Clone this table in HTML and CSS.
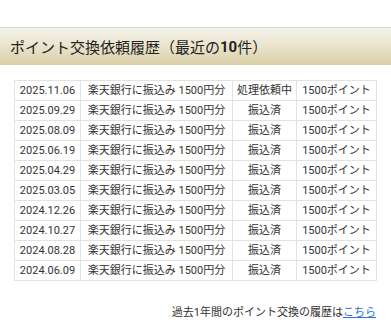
FILE: index.html
```html
<!DOCTYPE html>
<html lang="ja">
<head>
<meta charset="utf-8">
<link rel="stylesheet" href="styles.css">
</head>
<body>
<div class="page">
  <h2 class="title">ポイント交換依頼履歴（最近の<b>10</b>件）</h2>
  <table class="history">
    <colgroup><col class="c1"><col class="c2"><col class="c3"><col class="c4"></colgroup>
    <tr><td>2025.11.06</td><td>楽天銀行に振込み 1500円分</td><td>処理依頼中</td><td>1500ポイント</td></tr>
    <tr><td>2025.09.29</td><td>楽天銀行に振込み 1500円分</td><td>振込済</td><td>1500ポイント</td></tr>
    <tr><td>2025.08.09</td><td>楽天銀行に振込み 1500円分</td><td>振込済</td><td>1500ポイント</td></tr>
    <tr><td>2025.06.19</td><td>楽天銀行に振込み 1500円分</td><td>振込済</td><td>1500ポイント</td></tr>
    <tr><td>2025.04.29</td><td>楽天銀行に振込み 1500円分</td><td>振込済</td><td>1500ポイント</td></tr>
    <tr><td>2025.03.05</td><td>楽天銀行に振込み 1500円分</td><td>振込済</td><td>1500ポイント</td></tr>
    <tr><td>2024.12.26</td><td>楽天銀行に振込み 1500円分</td><td>振込済</td><td>1500ポイント</td></tr>
    <tr><td>2024.10.27</td><td>楽天銀行に振込み 1500円分</td><td>振込済</td><td>1500ポイント</td></tr>
    <tr><td>2024.08.28</td><td>楽天銀行に振込み 1500円分</td><td>振込済</td><td>1500ポイント</td></tr>
    <tr><td>2024.06.09</td><td>楽天銀行に振込み 1500円分</td><td>振込済</td><td>1500ポイント</td></tr>
  </table>
  <p class="more">過去1年間のポイント交換の履歴は<a href="#">こちら</a></p>
</div>
</body>
</html>
```
FILE: styles.css
```css
html, body {
  margin: 0;
  padding: 0;
  background: #fff;
}
.page {
  padding-top: 27px;
  font-family: Roboto, "Noto Sans CJK JP", sans-serif;
  color: #333;
}
.title {
  margin: 0;
  height: 38px;
  box-sizing: border-box;
  padding-left: 10px;
  display: flex;
  align-items: center;
  font-size: 15px;
  font-weight: normal;
  color: #222;
  border-top: 1px solid #dedbd2;
  background: linear-gradient(to bottom, #f4f2ea 0%, #ebe5cf 45%, #d9cea6 100%);
}
.title b {
  font-weight: bold;
}
.history {
  margin: 15px 15px 0 14px;
  width: 362px;
  border-collapse: collapse;
  table-layout: fixed;
  font-size: 11px;
}
.c1 { width: 66px; }
.c2 { width: 152px; }
.c3 { width: 64px; }
.c4 { width: 80px; }
.history td {
  border: 1px solid #e2e2e2;
  height: 19px;
  padding: 0;
  text-align: center;
  white-space: nowrap;
  line-height: 18px;
}
.more {
  margin: 22px 15px 0 0;
  text-align: right;
  font-size: 11px;
  color: #333;
}
.more a {
  color: #2a6fd6;
  text-decoration: underline;
}
```
